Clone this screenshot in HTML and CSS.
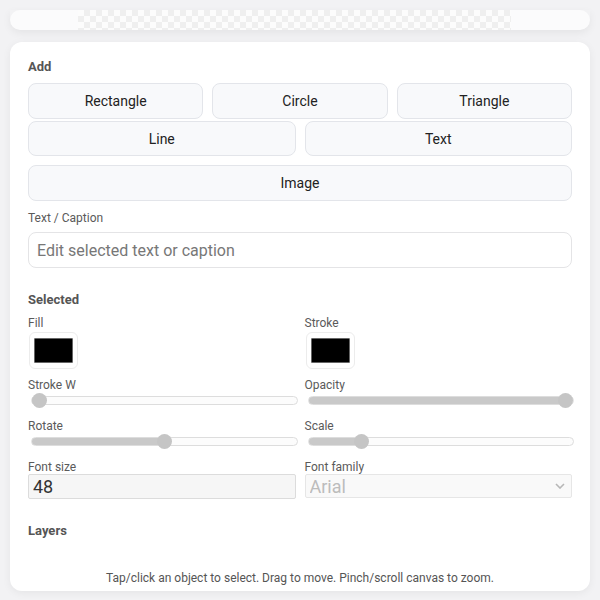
FILE: index.html
```html
<!DOCTYPE html>
<html lang="en">
<head>
  <meta charset="UTF-8"/>
  <meta name="viewport" content="width=device-width,initial-scale=1.0"/>
  <title>Canvas Editor</title>
  <link rel="stylesheet" href="styles.css">
</head>
<body>
  <div class="stage">
    <div class="stage-side"></div>
    <div class="stage-canvas"></div>
    <div class="stage-side"></div>
  </div>

  <div class="panel">
    <h3>Add</h3>
    <div class="btn-row three">
      <button>Rectangle</button>
      <button>Circle</button>
      <button>Triangle</button>
    </div>
    <div class="btn-row two tight">
      <button>Line</button>
      <button>Text</button>
    </div>
    <div class="btn-row one">
      <button>Image</button>
    </div>

    <label class="lbl caption-lbl" for="caption">Text / Caption</label>
    <input id="caption" class="caption" type="text" placeholder="Edit selected text or caption"/>

    <h3 class="section">Selected</h3>
    <div class="props">
      <div class="field">
        <label class="lbl" for="fill">Fill</label>
        <input id="fill" class="swatch" type="color" value="#000000"/>
      </div>
      <div class="field">
        <label class="lbl" for="stroke">Stroke</label>
        <input id="stroke" class="swatch" type="color" value="#000000"/>
      </div>
      <div class="field">
        <label class="lbl" for="strokeW">Stroke W</label>
        <input id="strokeW" class="range" type="range" min="0" max="40" value="0" style="--p:0"/>
      </div>
      <div class="field">
        <label class="lbl" for="opacity">Opacity</label>
        <input id="opacity" class="range" type="range" min="0" max="1" step="0.01" value="1" style="--p:1"/>
      </div>
      <div class="field">
        <label class="lbl" for="rotate">Rotate</label>
        <input id="rotate" class="range" type="range" min="-180" max="180" value="0" style="--p:0.5"/>
      </div>
      <div class="field">
        <label class="lbl" for="scale">Scale</label>
        <input id="scale" class="range" type="range" min="0.1" max="5" step="0.1" value="1" style="--p:0.1837"/>
      </div>
      <div class="field snug">
        <label class="lbl" for="fontSize">Font size</label>
        <input id="fontSize" class="num" type="number" value="48" disabled/>
      </div>
      <div class="field snug">
        <label class="lbl" for="fontFamily">Font family</label>
        <select id="fontFamily" class="sel" disabled>
          <option>Arial</option>
          <option>Georgia</option>
          <option>Courier New</option>
        </select>
      </div>
    </div>

    <h3 class="section">Layers</h3>
    <div class="layers"></div>

    <p class="hint">Tap/click an object to select. Drag to move. Pinch/scroll canvas to zoom.</p>
  </div>
</body>
</html>
```

FILE: styles.css
```css
* { box-sizing:border-box; }
body { margin:0; padding:10px; background:#f2f2f4; font-family:Roboto, "Liberation Sans", sans-serif; color:#222; }

/* stage strip (canvas area, scrolled up) */
.stage { display:flex; height:20px; margin-bottom:12px; border-radius:0 0 10px 10px; overflow:hidden; box-shadow:0 3px 8px rgba(0,0,0,0.06); }
.stage-side { background:#fbfbfc; }
.stage-side:first-child { width:68px; border-radius:10px 0 0 10px; }
.stage-side:last-child { width:79px; border-radius:0 10px 10px 0; }
.stage-canvas { flex:1; background-color:#fcfcfc; background-image:conic-gradient(#efefef 25%, transparent 0 50%, #efefef 0 75%, transparent 0); background-size:12px 12px; }

.panel { background:#fff; border-radius:12px; padding:18px 18px 6px; box-shadow:0 2px 8px rgba(0,0,0,0.06); }
h3 { margin:0; font-size:13px; line-height:14px; font-weight:700; color:#555; }
h3.section { margin-top:25px; }

.btn-row { display:grid; gap:9px; margin-top:9px; }
.btn-row.three { grid-template-columns:repeat(3,1fr); }
.btn-row.two { grid-template-columns:repeat(2,1fr); }
.btn-row.tight { margin-top:2px; }
.btn-row button { height:36px; background:#f8f9fb; border:1px solid #e3e5ea; border-radius:8px; font-family:inherit; font-size:14px; color:#222; cursor:pointer; }
.btn-row.tight button { height:35px; }

.lbl { display:block; font-size:12px; line-height:14px; color:#5a5a5a; }
.caption-lbl { margin-top:10px; }
.caption { display:block; width:100%; height:36px; margin-top:7px; padding:0 8px; border:1px solid #e4e4e6; border-radius:8px; font-family:inherit; font-size:16px; color:#222; }
.caption::placeholder { color:#777; }

.props { display:grid; grid-template-columns:1fr 1fr; column-gap:9px; row-gap:9px; margin-top:9px; }
.field { display:flex; flex-direction:column; gap:2px; align-items:flex-start; }
.field.snug { gap:0; }

.swatch { -webkit-appearance:none; appearance:none; width:49px; height:37px; padding:5px 4px; margin-left:1px; background:#fff; border:1px solid #ececec; border-radius:6px; cursor:pointer; }
.swatch::-webkit-color-swatch-wrapper { padding:0; }
.swatch::-webkit-color-swatch { border:1px solid #666; border-radius:1px; }

/* sliders: --p is the fraction of the value along the track */
.range { -webkit-appearance:none; appearance:none; width:calc(100% - 1px); height:16px; margin:-2px 0 2px 3px; background:transparent; }
.range::-webkit-slider-runnable-track { height:9px; border:1px solid #ddd; border-radius:5px; background:linear-gradient(to right, #c9c9c9 calc(7px + var(--p) * (100% - 14px)), #fcfcfc 0); }
.range::-webkit-slider-thumb { -webkit-appearance:none; width:15px; height:15px; margin-top:-4px; border-radius:50%; background:#c5c5c5; border:none; }

.num, .sel { width:100%; height:25px; padding:0 4px; border:1px solid #dcdcdc; border-radius:2px; background:#f6f6f6; font-family:inherit; font-size:18px; }
.num { color:#333; }
.sel { -webkit-appearance:none; appearance:none; height:24px; color:#a0a0a0; background:#f7f7f7 url("data:image/svg+xml,%3Csvg xmlns='http://www.w3.org/2000/svg' width='10' height='6' viewBox='0 0 10 6'%3E%3Cpath d='M1 1l4 4 4-4' fill='none' stroke='%23999' stroke-width='1.6'/%3E%3C/svg%3E") no-repeat right 6px center; }

.layers { min-height:33px; }
.hint { margin:0; text-align:center; font-size:12px; line-height:14px; color:#555; }
```
